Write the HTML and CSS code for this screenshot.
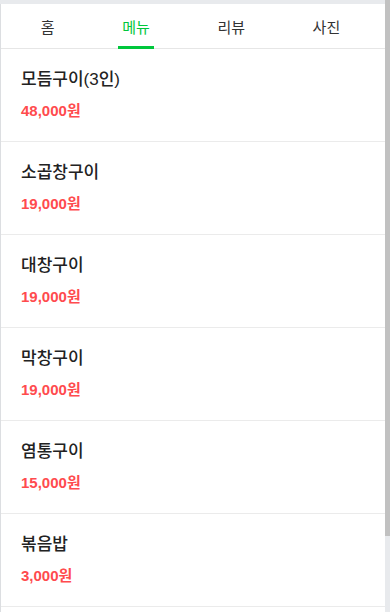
FILE: index.html
```html
<!DOCTYPE html>
<html lang="ko">
<head>
<meta charset="utf-8">
<title>메뉴</title>
<link rel="stylesheet" href="styles.css">
</head>
<body>
<div class="page">
  <nav class="tabs">
    <a class="tab">홈</a>
    <a class="tab active">메뉴</a>
    <a class="tab">리뷰</a>
    <a class="tab">사진</a>
  </nav>
  <ul class="menu">
    <li class="item"><div class="name">모듬구이(3인)</div><div class="price">48,000원</div></li>
    <li class="item"><div class="name">소곱창구이</div><div class="price">19,000원</div></li>
    <li class="item"><div class="name">대창구이</div><div class="price">19,000원</div></li>
    <li class="item"><div class="name">막창구이</div><div class="price">19,000원</div></li>
    <li class="item"><div class="name">염통구이</div><div class="price">15,000원</div></li>
    <li class="item"><div class="name">볶음밥</div><div class="price">3,000원</div></li>
  </ul>
</div>
<div class="scrollbar"><div class="thumb"></div></div>
</body>
</html>
```

FILE: styles.css
```css
html {
  background: #e8eaed;
}
body {
  margin: 0;
  padding-top: 4px;
  height: 608px;
  overflow: hidden;
  font-family: "Liberation Sans", "Noto Sans CJK KR", sans-serif;
  color: #222;
}
.page {
  background: #fff;
  border-left: 1px solid #dcdee1;
  margin-right: 5px;
  height: 608px;
}
.tabs {
  display: flex;
  height: 44px;
  padding: 0 11px 0 6px;
  border-bottom: 1px solid #e6e6e6;
}
.tab {
  flex: 1 1 auto;
  display: flex;
  justify-content: center;
  align-items: center;
  font-size: 15px;
  color: #333;
  position: relative;
}
.tab.active {
  color: #00c73c;
}
.tab.active::after {
  content: "";
  position: absolute;
  left: 50%;
  bottom: -1px;
  width: 36px;
  margin-left: -18px;
  height: 3px;
  background: #00c73c;
}
.menu {
  list-style: none;
  margin: 0;
  padding: 0;
}
.item {
  padding: 19px 20px 20px;
  border-bottom: 1px solid #ebebeb;
}
.name {
  font-size: 17px;
  line-height: 24px;
  font-weight: 500;
  color: #222;
}
.price {
  margin-top: 9px;
  font-size: 15px;
  line-height: 20px;
  font-weight: 700;
  color: #ff4b4e;
}
.scrollbar {
  position: fixed;
  top: 0;
  right: 0;
  width: 5px;
  height: 612px;
  background: #e8eaed;
}
.thumb {
  height: 536px;
  background: #c1c1c1;
}
```
